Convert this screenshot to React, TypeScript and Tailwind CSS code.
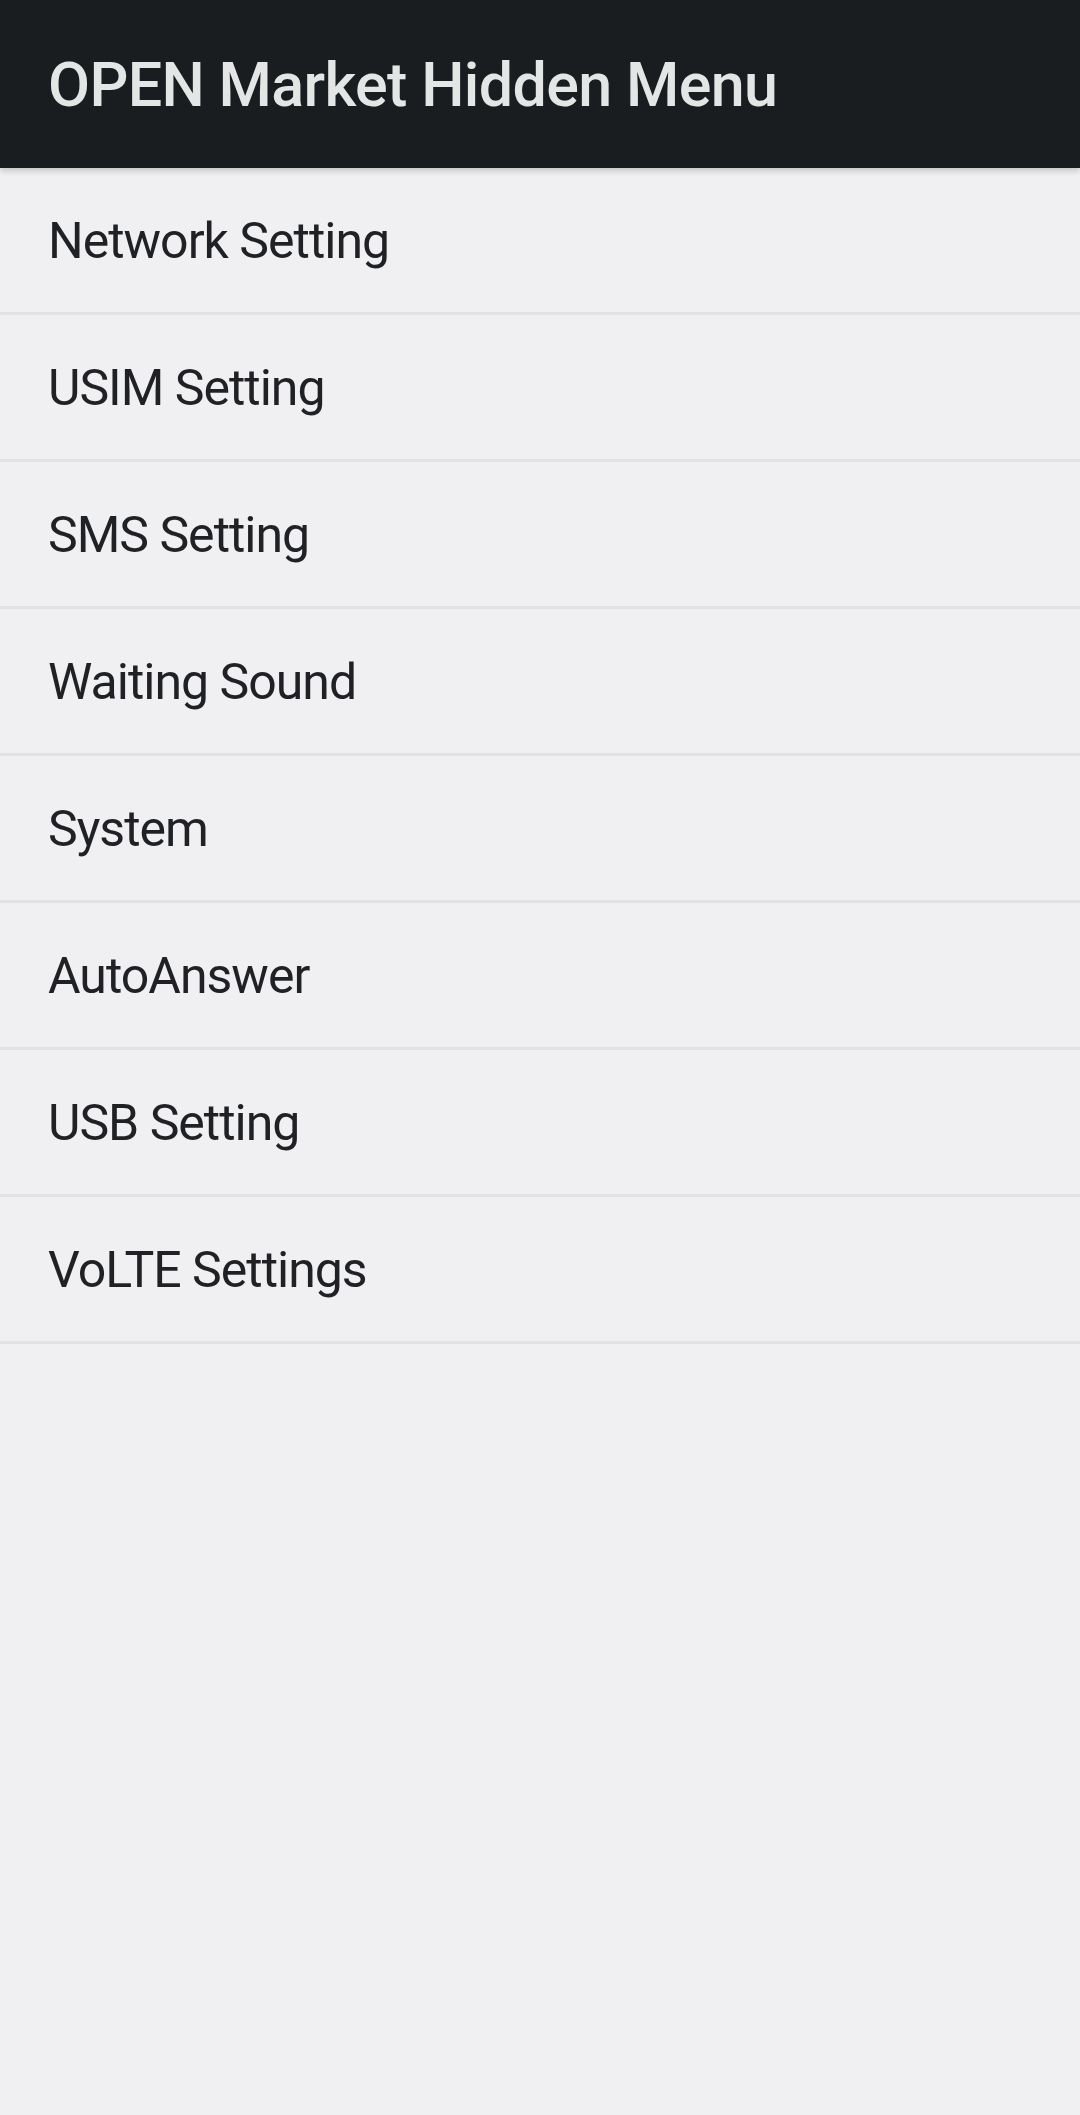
const ITEMS = [
  'Network Setting',
  'USIM Setting',
  'SMS Setting',
  'Waiting Sound',
  'System',
  'AutoAnswer',
  'USB Setting',
  'VoLTE Settings',
]

export default function App() {
  return (
    <div className="min-h-[2115px] w-[1080px] bg-[#f0f0f2] font-['Roboto',sans-serif]">
      <header className="relative z-10 flex h-[168px] items-center bg-[#1a1d20] pl-[48px] pt-[3px] shadow-[0_3px_6px_rgba(0,0,0,0.18)]">
        <h1 className="text-[61px] font-medium leading-none tracking-[-0.65px] text-[#e4e6e6]">
          OPEN Market Hidden Menu
        </h1>
      </header>
      <ul>
        {ITEMS.map(item => (
          <li
            key={item}
            className="box-border flex h-[147px] items-center border-b-[3px] border-[#e2e2e4] pl-[48px] pt-[2px]"
          >
            <span className="text-[50px] leading-none tracking-[-1px] text-[#1f2124]">{item}</span>
          </li>
        ))}
      </ul>
    </div>
  )
}
